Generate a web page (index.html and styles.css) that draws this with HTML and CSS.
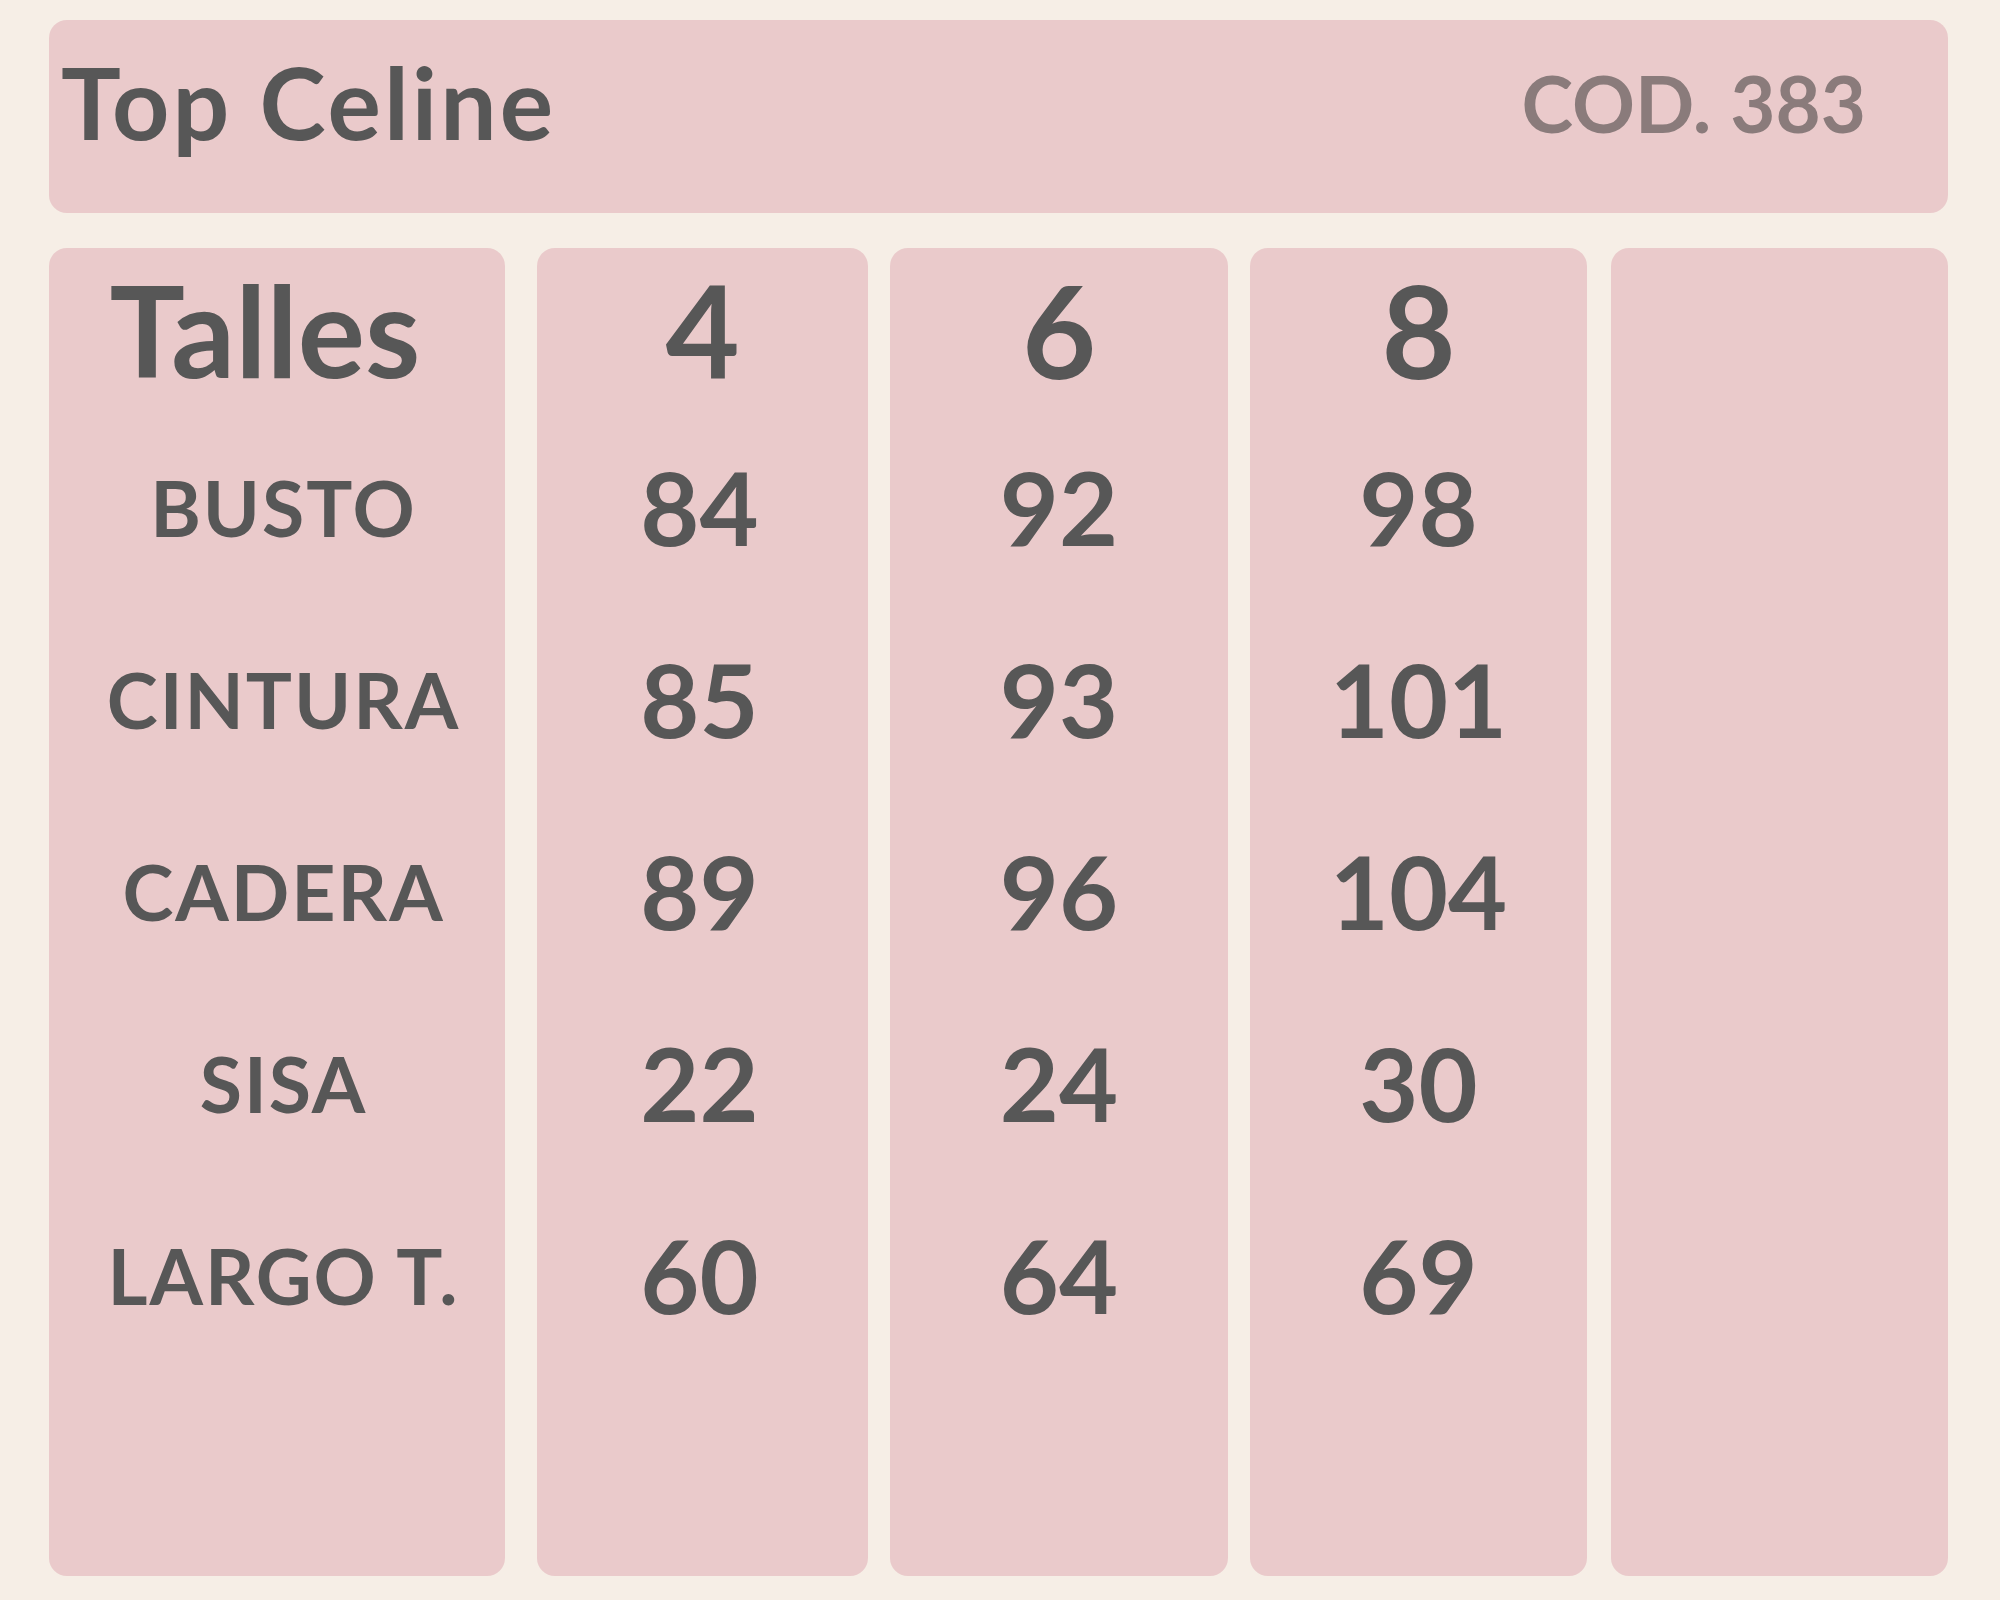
FILE: index.html
```html
<!DOCTYPE html>
<html lang="es">
<head>
<meta charset="utf-8">
<title>Top Celine</title>
<link rel="stylesheet" href="styles.css">
</head>
<body>
<div class="page">
  <header class="header">
    <h1 class="title">Top Celine</h1>
    <div class="code">COD. 383</div>
  </header>
  <main class="table">
    <section class="col col-labels">
      <div class="cell head"><span class="talles">Talles</span></div>
      <div class="cell label">BUSTO</div>
      <div class="cell label">CINTURA</div>
      <div class="cell label">CADERA</div>
      <div class="cell label">SISA</div>
      <div class="cell label">LARGO T.</div>
    </section>
    <section class="col col-a">
      <div class="cell head">4</div>
      <div class="cell num">84</div>
      <div class="cell num">85</div>
      <div class="cell num">89</div>
      <div class="cell num">22</div>
      <div class="cell num">60</div>
    </section>
    <section class="col col-b">
      <div class="cell head">6</div>
      <div class="cell num">92</div>
      <div class="cell num">93</div>
      <div class="cell num">96</div>
      <div class="cell num">24</div>
      <div class="cell num">64</div>
    </section>
    <section class="col col-c">
      <div class="cell head">8</div>
      <div class="cell num">98</div>
      <div class="cell num">101</div>
      <div class="cell num">104</div>
      <div class="cell num">30</div>
      <div class="cell num">69</div>
    </section>
    <section class="col col-d"></section>
  </main>
</div>
</body>
</html>
```
FILE: styles.css
```css
* { box-sizing: border-box; }

html, body {
  margin: 0;
  padding: 0;
  background: #f6eee6;
}

body {
  font-family: Lato, "Liberation Sans", sans-serif;
  font-weight: 700;
  color: #575757;
}

.page {
  width: 2000px;
  height: 1600px;
  padding: 20px 52px 0 49px;
}

.header {
  display: flex;
  justify-content: space-between;
  align-items: flex-start;
  height: 193px;
  padding: 0 82px 0 12px;
  background: #eacacb;
  border-radius: 18px;
}

.title {
  margin: 31px 0 0 0;
  font-size: 100px;
  line-height: 1;
  font-weight: 700;
  letter-spacing: 3px;
}

.code {
  margin-top: 44px;
  font-size: 78px;
  line-height: 1;
  color: #8a7b7b;
}

.table {
  display: flex;
  margin-top: 35px;
  height: 1328px;
}

.col {
  display: flex;
  flex-direction: column;
  background: #eacacb;
  border-radius: 18px;
}

.col-labels { width: 456px; margin-right: 32px; }
.col-a { width: 331px; margin-right: 22px; }
.col-b { width: 338px; margin-right: 22px; }
.col-c { width: 337px; margin-right: 24px; }
.col-d { width: 337px; }

.cell {
  display: flex;
  align-items: center;
  justify-content: center;
  height: 192px;
  line-height: 1;
}

.cell.head {
  height: 163px;
  font-size: 128px;
}

.talles {
  font-size: 126px;
  letter-spacing: 0;
  padding-right: 24px;
}

.label {
  font-size: 77px;
  padding-left: 13px;
  letter-spacing: 2px;
}

.num {
  font-size: 102px;
  letter-spacing: 0;
  padding-right: 6px;
}

.col-b .num, .col-c .num { padding-right: 0; }
```
